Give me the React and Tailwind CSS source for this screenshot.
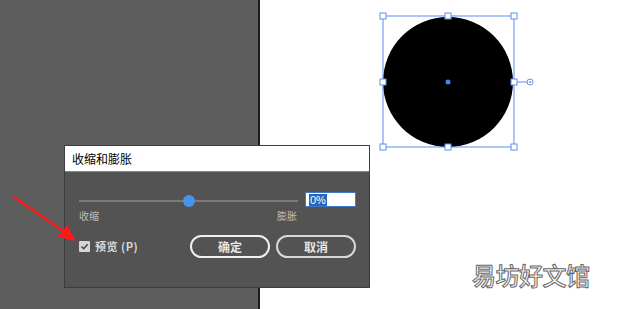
import React from "react";

const font = { fontFamily: '"Noto Sans CJK SC", "Liberation Sans", sans-serif' };

function Handle({ x, y }) {
  return <rect x={x - 3} y={y - 3} width="6" height="6" fill="white" stroke="#5b8ff0" strokeWidth="1" />;
}

export default function App() {
  return (
    <div className="relative w-[620px] h-[309px] overflow-hidden bg-white" style={font}>
      <div className="flex h-full">
        <div className="w-[260px] h-full bg-[#5d5d5d] border-r-2 border-[#1e1e1e]" />
        <div className="flex-1 bg-white" />
      </div>

      {/* canvas object */}
      <svg className="absolute left-0 top-0" width="620" height="309">
        <circle cx="448" cy="82" r="65" fill="#000" />
        <rect x="383" y="16" width="131" height="131" fill="none" stroke="#5b8ff0" strokeWidth="1" />
        <line x1="514" y1="82" x2="527" y2="82" stroke="#5b8ff0" />
        <circle cx="530" cy="82" r="3" fill="white" stroke="#5b8ff0" />
        <circle cx="530" cy="82" r="1" fill="#5b8ff0" />
        <circle cx="448" cy="82" r="2.5" fill="#4b7ff0" />
        <Handle x={383} y={16} />
        <Handle x={448} y={16} />
        <Handle x={514} y={16} />
        <Handle x={383} y={82} />
        <Handle x={514} y={82} />
        <Handle x={383} y={147} />
        <Handle x={448} y={147} />
        <Handle x={514} y={147} />
      </svg>

      {/* dialog */}
      <div className="absolute left-[64px] top-[145px] w-[306px] h-[143px] flex flex-col border border-[#3c3c3c] bg-[#535353]">
        <div className="h-[26px] bg-white flex items-center pl-[7px] text-[12px] text-black border-b border-[#888]">
          收缩和膨胀
        </div>
        <div className="flex flex-col pl-[14px] pr-[13px] pt-[22px]">
          <div className="flex items-start">
            <div className="flex-1 flex flex-col">
              <div className="relative h-[14px] flex items-center">
                <div className="h-[2px] w-full bg-[#7a7a7a]" />
                <div className="absolute left-[104px] top-[1px] w-[12px] h-[12px] rounded-full bg-[#4a93ea]" />
              </div>
              <div className="flex justify-between text-[10px] leading-[14px] text-[#bdbdbd] mt-[1px] pr-[1px]">
                <span>收缩</span>
                <span>膨胀</span>
              </div>
            </div>
            <div className="ml-[7px] -mt-[2px] w-[51px] h-[15px] bg-white border border-[#3d7bc8] flex items-center pl-[3px]">
              <span className="bg-[#2b64b8] text-white text-[11px] leading-[12px] px-[1px]" style={{ fontFamily: '"Liberation Sans", sans-serif' }}>0%</span>
            </div>
          </div>
          <div className="flex items-center mt-[12px]">
            <div className="w-[11px] h-[11px] bg-[#d6d6d6] rounded-[1px] flex items-center justify-center">
              <svg width="9" height="9" viewBox="0 0 9 9"><path d="M1.5 4.5 L3.7 6.7 L7.6 2.2" fill="none" stroke="#444" strokeWidth="1.6" /></svg>
            </div>
            <span className="ml-[5px] text-[11px] text-[#d8d8d8] font-bold tracking-[0.5px]">预览 (P)</span>
            <div className="ml-auto flex gap-[6px]">
              <button className="w-[80px] h-[23px] rounded-full border-2 border-[#f0f0f0] bg-[#535353] text-[12px] text-[#e6e6e6] font-bold">确定</button>
              <button className="w-[80px] h-[23px] rounded-full border-2 border-[#d8d8d8] bg-[#535353] text-[12px] text-[#e6e6e6] font-bold">取消</button>
            </div>
          </div>
        </div>
      </div>

      {/* red annotation arrow */}
      <svg className="absolute left-0 top-0 pointer-events-none" width="620" height="309">
        <line x1="14" y1="197" x2="66" y2="233" stroke="#ff1a1a" strokeWidth="2.5" />
        <polygon points="76,241 58,237 67,225" fill="#ff1a1a" />
      </svg>

      {/* watermark */}
      <div
        className="absolute left-[472px] top-[257px] text-[24px] text-white tracking-[-0.5px]"
        style={{ ...font, WebkitTextStroke: "1px #666", fontWeight: 500 }}
      >
        易坊好文馆
      </div>
    </div>
  );
}
